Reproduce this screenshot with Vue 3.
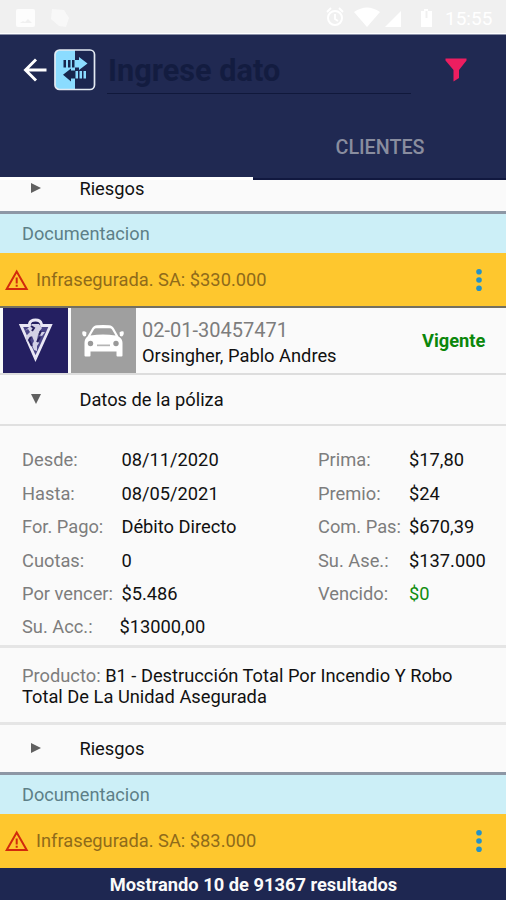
<script setup>
const leftFields = [
  { label: 'Desde:', value: '08/11/2020' },
  { label: 'Hasta:', value: '08/05/2021' },
  { label: 'For. Pago:', value: 'Débito Directo' },
  { label: 'Cuotas:', value: '0' },
  { label: 'Por vencer:', value: '$5.486' },
  { label: 'Su. Acc.:', value: '$13000,00', shifted: true },
]
const rightFields = [
  { label: 'Prima:', value: '$17,80' },
  { label: 'Premio:', value: '$24' },
  { label: 'Com. Pas:', value: '$670,39' },
  { label: 'Su. Ase.:', value: '$137.000' },
  { label: 'Vencido:', value: '$0', ok: true },
]
</script>

<template>
  <div class="screen">
    <div class="status">
      <svg class="status-left" width="60" height="34" viewBox="0 0 60 34" fill="#fdfdfd">
        <path fill-rule="evenodd" d="M4 9h15a2 2 0 0 1 2 2v14a2 2 0 0 1-2 2H4a2 2 0 0 1-2-2V11a2 2 0 0 1 2-2zM6 23h12l-4-4-3 3-2-1z" />
        <path d="M38 9l12 1 5 8-3 9-7-1-8-7z" opacity=".6" />
      </svg>
      <div class="status-right">
        <svg width="115" height="34" viewBox="0 0 115 34" fill="#fff">
          <circle cx="9" cy="18" r="7" fill="none" stroke="#fff" stroke-width="2" />
          <path d="M9 14v5l3 2M1 12l4-4M17 12l-4-4" fill="none" stroke="#fff" stroke-width="1.8" />
          <path d="M28 12q13-9 26 0L41 27z" />
          <path d="M59 27h16V11z" />
          <path d="M95 11h3V9h4v2h4v16H95zM99.500 11v7h2v-7z" fill-rule="evenodd" />
        </svg>
        <span class="clock">15:55</span>
      </div>
    </div>

    <header class="appbar">
      <div class="toolbar">
        <svg class="back" width="24" height="24" viewBox="0 0 24 24" fill="none" stroke="#fff" stroke-width="2.9">
          <path d="M23.500 12H2.500M13 1.500L2.500 12 13 22.500" />
        </svg>
        <svg class="logo" width="42" height="42" viewBox="0 0 42 42">
          <rect x="1" y="1" width="39.500" height="39.500" rx="4.500" fill="#1b2650" />
          <path d="M21 1H5.500A4.500 4.500 0 0 0 1 5.500v30.500A4.500 4.500 0 0 0 5.500 40.500H21z" fill="#8bdcff" />
          <path d="M9.500 11h2.500v7.500H9.500zM14 11h2.500v7.500H14zM18 11h2.500v7.500H18zM21 21.500v8h-4v3L9 25.800l8-6.300v2z" fill="#17264d" />
          <path d="M21 11h4V8l8.500 6.500-8.500 6.500V18.500h-4zM21.500 22H24v7.500h-2.500zM25.500 22H28v7.500h-2.500zM29.500 22H32v7.500h-2.500z" fill="#8bdcff" />
          <rect x="1" y="1" width="39.500" height="39.500" rx="4.500" fill="none" stroke="#e3eaf2" stroke-width="1.700" />
        </svg>
        <div class="search">Ingrese dato</div>
        <svg class="filter" width="22" height="24" viewBox="0 0 22 24">
          <path d="M.5.500h21v2L14 12v8l-5.500 3.500V12L.5 2.500z" fill="#ec1e60" />
        </svg>
      </div>
      <div class="tabs">
        <div class="tab active"></div>
        <div class="tab"><span class="tab-text">CLIENTES</span></div>
      </div>
    </header>

    <main class="list">
      <div class="expander clipped">
        <svg class="arrow" width="10" height="10" viewBox="0 0 10 10"><path d="M0 0l10 5-10 5z" fill="#606060" /></svg>
        <span class="expander-text">Riesgos</span>
      </div>
      <div class="doc"><span>Documentacion</span></div>
      <div class="alert first">
        <svg class="warn" width="24" height="22" viewBox="0 0 24 22" fill="none" stroke="#d22a0c" stroke-width="2">
          <path d="M11.700 2.500L1.700 20h20zM11.700 8.500v6M11.700 15.700v2" />
        </svg>
        <span class="alert-text">Infrasegurada. SA: $330.000</span>
        <svg class="dots" width="6" height="24" viewBox="0 0 6 24" fill="#2492c8"><circle cx="3" cy="3.700" r="2.800" /><circle cx="3" cy="12" r="2.800" /><circle cx="3" cy="20.300" r="2.800" /></svg>
      </div>

      <div class="policy">
        <div class="tile shield">
          <svg width="65" height="65" viewBox="0 0 65 65">
            <path d="M18 18h29L32.500 50z" fill="#4b4688" />
            <g fill="none" stroke="#e9e7f5" stroke-width="2.800">
              <path d="M27 17.500H18L32.500 50.500 47.500 17.500H38" />
              <path d="M26.500 18v-2.500q1-3.500 6-3.500t6 4V18" />
            </g>
            <path d="M24 21l5-5 7 0 3 4-3 4 6 0-3 4-4-1-1 5 2 3-2 3 0 5-3-1-2-5 2-4-2-5-3 2-1 4-2-1v-5l4-4-2-3-3 2z" fill="#d3d1e6" />
            <path d="M28 18l3 2-2 3M36 27l2-4M34 34l3-5M28 29l-2 3 3 6" stroke="#28215f" stroke-width="2" fill="none" />
          </svg>
        </div>
        <div class="tile car">
          <svg width="65" height="65" viewBox="0 0 65 65">
            <g fill="#fff">
              <path d="M16.500 28.500l4.500-8q1.500-3 5-3.200 6-.5 12 0 3.500.2 5 3.200l4.500 8q4 2 4 6.500V47.500q0 1-1 1h-4q-1 0-1-1v-4H19.500v4q0 1-1 1h-4q-1 0-1-1V35q0-4.500 3-6.500z" />
              <path d="M11.500 23.500q2-.8 4 1l-.5 3.500-2 .5q-2.500-2-1.500-5zM52.500 23.500q-2-.8-4 1l.5 3.500 2 .5q2.500-2 1.500-5z" />
            </g>
            <path d="M19.500 27.500l3.500-6q.8-1.300 2.300-1.300h13.400q1.500 0 2.300 1.300l3.500 6q-12.500-2-25 0z" fill="#a0a0a0" />
            <circle cx="19.500" cy="35.500" r="2.700" fill="#999" /><circle cx="45" cy="35.500" r="2.700" fill="#999" />
            <rect x="26" y="36.500" width="13" height="1.700" fill="#b5b5b5" />
          </svg>
        </div>
        <div class="who">
          <div class="number">02-01-30457471</div>
          <div class="name">Orsingher, Pablo Andres</div>
        </div>
        <div class="state">Vigente</div>
      </div>

      <div class="expander datos">
        <svg class="arrow" width="10" height="10" viewBox="0 0 10 10"><path d="M0 0h10L5 10z" fill="#606060" /></svg>
        <span class="expander-text">Datos de la póliza</span>
      </div>

      <div class="details">
        <dl class="col left">
          <div v-for="f in leftFields" :key="f.label" class="field">
            <dt>{{ f.label }}</dt>
            <dd :class="{ shifted: f.shifted }">{{ f.value }}</dd>
          </div>
        </dl>
        <dl class="col right">
          <div v-for="f in rightFields" :key="f.label" class="field">
            <dt>{{ f.label }}</dt>
            <dd :class="{ ok: f.ok }">{{ f.value }}</dd>
          </div>
        </dl>
      </div>

      <div class="product">
        <div><span class="muted">Producto:</span> B1 - Destrucción Total Por Incendio Y Robo</div>
        <div>Total De La Unidad Asegurada</div>
      </div>

      <div class="expander riesgos">
        <svg class="arrow" width="10" height="10" viewBox="0 0 10 10"><path d="M0 0l10 5-10 5z" fill="#606060" /></svg>
        <span class="expander-text">Riesgos</span>
      </div>
      <div class="doc"><span>Documentacion</span></div>
      <div class="alert last">
        <svg class="warn" width="24" height="22" viewBox="0 0 24 22" fill="none" stroke="#d22a0c" stroke-width="2">
          <path d="M11.700 2.500L1.700 20h20zM11.700 8.500v6M11.700 15.700v2" />
        </svg>
        <span class="alert-text">Infrasegurada. SA: $83.000</span>
        <svg class="dots" width="6" height="24" viewBox="0 0 6 24" fill="#2492c8"><circle cx="3" cy="3.700" r="2.800" /><circle cx="3" cy="12" r="2.800" /><circle cx="3" cy="20.300" r="2.800" /></svg>
      </div>
    </main>

    <footer class="footer">Mostrando 10 de 91367 resultados</footer>
  </div>
</template>

<style>
body { margin: 0; }
</style>

<style scoped>
.screen {
  width: 506px;
  height: 900px;
  overflow: hidden;
  display: flex;
  flex-direction: column;
  background: #fafafa;
  color: #111;
  font-family: Roboto, "Liberation Sans", sans-serif;
  font-size: 18.3px;
  line-height: 22px;
  white-space: nowrap;
}
.screen * { box-sizing: border-box; }
svg { display: block; flex: none; }
.status {
  height: 34px;
  flex: none;
  display: flex;
  justify-content: space-between;
  padding: 0 10px 0 14px;
  background: #f0f0f0;
  border-bottom: 1px solid #fff;
}
.status-right { display: flex; align-items: center; margin-right: 1px; }
.clock { width: 50px; margin-left: 4px; padding-top: 4px; color: #fff; font-size: 19px; }
.appbar { height: 146px; flex: none; background: #202952; border-top: 1px solid #8a90a8; }
.toolbar { height: 78px; display: flex; align-items: flex-start; padding-left: 23px; }
.back { margin-top: 23px; }
.logo { margin: 14px 0 0 7px; }
.search {
  width: 304px;
  height: 44px;
  margin: 15px 0 0 11px;
  padding: 4px 0 0 1px;
  border-bottom: 1px solid #10183b;
  color: #131c40;
  font-size: 30.7px;
  line-height: 34px;
  font-weight: 700;
}
.filter { margin: 23px 0 0 34px; }
.tabs { height: 67px; display: flex; }
.tab { width: 253px; display: flex; justify-content: center; padding: 24px 0 0 1px; border-bottom: 2px solid #11183f; }
.tab.active { border-bottom: 3px solid #fff; }
.tab-text { color: #898d9f; font-size: 19.700px; font-weight: 500; }
.list { flex: none; }
.expander { display: flex; align-items: center; padding-left: 31px; }
.expander-text { margin-left: 38.4px; }
.clipped { height: 31px; padding-bottom: 13px; }
.clipped .arrow { margin-bottom: 2px; }
.doc {
  height: 42px;
  padding: 9px 0 0 22px;
  border-top: 3px solid #8d97a5;
  background: #cceff7;
  color: #5d7f87;
  font-size: 18.2px;
}
.alert { display: flex; align-items: center; padding-left: 5px; background: #fec72e; }
.alert.first { height: 55px; border-bottom: 2px solid #74705f; }
.alert.last { height: 54px; }
.alert-text { width: 430px; margin-left: 7px; color: #8f6b1a; }
.dots { margin-left: 10px; }
.policy { height: 67px; display: flex; padding-left: 3px; border-bottom: 2px solid #ddd; }
.tile { width: 65px; height: 65px; }
.shield { background: #241f61; }
.car { margin-left: 3px; background: #9f9f9f; }
.who { width: 286px; padding: 11px 0 0 6px; }
.number { height: 26px; color: #7d7d7d; font-size: 20px; }
.state { color: #0b870b; font-weight: 700; padding-top: 22px; }
.datos { height: 51px; padding-top: 1px; border-bottom: 2px solid #e0e0e0; }
.datos .arrow { margin-bottom: 2px; }
.details { height: 222px; display: flex; padding: 23.4px 0 0 22px; border-bottom: 3px solid #e5e5e5; }
.col { margin: 0; }
.left { width: 296px; }
.field { height: 33.4px; display: flex; }
dt { width: 99.4px; color: #7d7d7d; }
.right dt { width: 91px; }
dd { margin: 0; }
dd.shifted { margin-left: -2px; }
dd.ok { color: #0f8c0f; }
.product { height: 77px; padding: 17px 0 0 22px; border-bottom: 3px solid #e5e5e5; line-height: 21px; }
.muted { color: #7d7d7d; }
.riesgos { height: 47px; padding-top: 1px; }
.riesgos .arrow { margin-bottom: 2px; }
.footer { flex: 1; background: #1e2751; color: #fafafa; font-weight: 700; text-align: center; padding: 6px 0 0 1px; }
</style>
